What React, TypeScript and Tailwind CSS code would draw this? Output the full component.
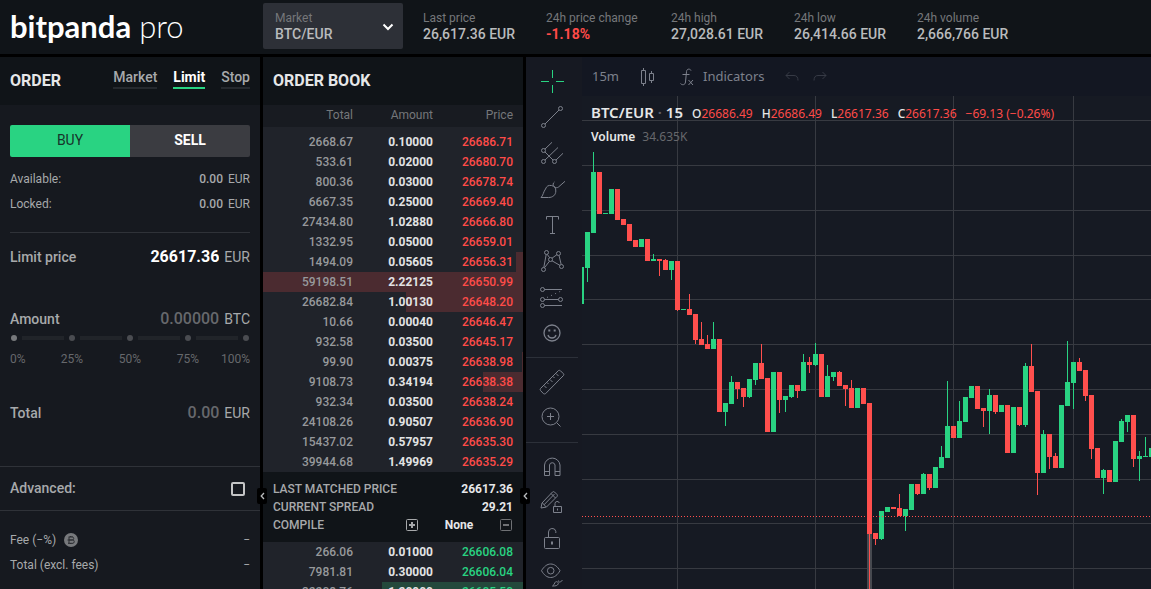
import React from "react";

type Candle = [number, number, number, number, 0 | 1];

// [high, open/close top, open/close bottom, low, rising]
const CANDLES: Candle[] = [
  [267, 267, 304, 304, 1], [232, 232, 268, 282, 1], [152, 172, 233, 233, 1], [172, 172, 214, 214, 0],
  [213, 213, 214, 214, 1], [189, 189, 214, 214, 1], [189, 189, 220, 220, 0], [219, 219, 225, 225, 0],
  [224, 224, 241, 241, 0], [240, 240, 247, 247, 0], [239, 239, 247, 247, 1], [239, 239, 261, 261, 0],
  [254, 259, 261, 261, 1], [259, 259, 261, 276, 0], [259, 260, 270, 270, 0], [261, 261, 270, 280, 1],
  [261, 261, 310, 311, 0], [309, 309, 310, 310, 1], [294, 309, 315, 315, 0], [314, 314, 340, 344, 0],
  [322, 339, 345, 345, 0], [335, 344, 349, 349, 0], [322, 339, 349, 349, 1], [339, 339, 412, 412, 0],
  [403, 403, 412, 426, 1], [376, 382, 404, 404, 1], [382, 382, 389, 399, 0], [388, 388, 397, 407, 0],
  [379, 379, 397, 398, 1], [363, 363, 380, 385, 1], [344, 363, 379, 379, 0], [378, 378, 432, 432, 0],
  [372, 372, 432, 432, 1], [372, 372, 400, 413, 0], [396, 396, 400, 412, 1], [385, 385, 397, 398, 1],
  [385, 385, 391, 398, 0], [354, 362, 391, 391, 1], [357, 362, 365, 373, 0], [343, 354, 365, 366, 1],
  [354, 354, 397, 397, 0], [365, 376, 397, 397, 1], [372, 372, 377, 381, 1], [371, 372, 386, 386, 0],
  [385, 385, 389, 406, 0], [380, 388, 408, 408, 0], [388, 388, 408, 408, 1], [388, 388, 404, 404, 0],
  [403, 403, 534, 620, 0], [533, 533, 539, 545, 0], [511, 511, 539, 540, 1], [507, 507, 512, 512, 1],
  [507, 507, 509, 509, 0], [494, 508, 516, 516, 0], [509, 509, 516, 531, 1], [484, 484, 510, 510, 1],
  [484, 484, 494, 495, 0], [473, 474, 494, 494, 1], [474, 474, 488, 490, 0], [467, 467, 488, 488, 1],
  [446, 457, 468, 468, 1], [381, 426, 458, 458, 1], [426, 426, 438, 438, 0], [401, 421, 438, 438, 1],
  [397, 397, 422, 422, 1], [386, 386, 398, 398, 1], [386, 386, 409, 409, 0], [408, 408, 411, 427, 0],
  [389, 395, 411, 434, 1], [395, 395, 412, 414, 0], [405, 405, 412, 412, 1], [405, 405, 453, 453, 0],
  [407, 407, 453, 453, 1], [407, 407, 425, 426, 0], [363, 366, 425, 427, 1], [344, 366, 392, 392, 0],
  [391, 391, 473, 495, 0], [430, 434, 473, 473, 1], [434, 434, 457, 469, 0], [453, 456, 468, 468, 0],
  [405, 405, 468, 468, 1], [341, 382, 406, 406, 1], [362, 362, 383, 409, 1], [358, 362, 371, 371, 0],
  [370, 370, 396, 401, 0], [395, 395, 449, 459, 0], [448, 448, 478, 478, 0], [469, 470, 478, 494, 1],
  [470, 470, 482, 482, 0], [441, 441, 482, 482, 1], [419, 421, 442, 442, 1], [415, 415, 422, 432, 1],
  [415, 415, 459, 467, 0], [451, 456, 459, 481, 1], [437, 456, 457, 457, 1], [448, 448, 457, 457, 1],
];
const TOP = 96;

const ASKS: [string, string, string, number][] = [
  ["2668.67", "0.10000", "26686.71", 0],
  ["533.61", "0.02000", "26680.70", 0],
  ["800.36", "0.03000", "26678.74", 0],
  ["6667.35", "0.25000", "26669.40", 0],
  ["27434.80", "1.02880", "26666.80", 0],
  ["1332.95", "0.05000", "26659.01", 0],
  ["1494.09", "0.05605", "26656.31", 2.7],
  ["59198.51", "2.22125", "26650.99", 100],
  ["26682.84", "1.00130", "26648.20", 45],
  ["10.66", "0.00040", "26646.47", 0],
  ["932.58", "0.03500", "26645.17", 0],
  ["99.90", "0.00375", "26638.98", 0.4],
  ["9108.73", "0.34194", "26638.38", 15.4],
  ["932.34", "0.03500", "26638.24", 0],
  ["24108.26", "0.90507", "26636.90", 0],
  ["15437.02", "0.57957", "26635.30", 0],
  ["39944.68", "1.49969", "26635.29", 0],
];
const BIDS: [string, string, string, number][] = [
  ["266.06", "0.01000", "26606.08", 0],
  ["7981.81", "0.30000", "26606.04", 0],
  ["32208.76", "1.20900", "26605.50", 54.2],
];

const STATS = [
  { label: "Last price", value: "26,617.36 EUR" },
  { label: "24h price change", value: "-1.18%", down: true },
  { label: "24h high", value: "27,028.61 EUR" },
  { label: "24h low", value: "26,414.66 EUR" },
  { label: "24h volume", value: "2,666,766 EUR" },
];

function Header() {
  return (
    <header className="flex h-[54px] shrink-0 items-center bg-[#101418] pb-[2px]">
      <a href="#" className="flex w-[263px] shrink-0 items-baseline gap-2 pl-[10px] font-['Lato'] text-[31px] leading-9 text-white">
        <span className="font-bold">bitpanda</span>
        <span className="font-light">pro</span>
      </a>
      <div className="relative flex h-[46px] w-[140px] shrink-0 flex-col justify-center rounded-xs bg-[#2d3037] pl-3">
        <label htmlFor="market" className="text-xs leading-4 text-[#75777a]">Market</label>
        <select id="market" className="w-full appearance-none bg-transparent text-sm leading-4 font-medium text-[#b9bbbd] outline-none">
          <option>BTC/EUR</option>
        </select>
        <svg className="pointer-events-none absolute top-4 right-[7px] size-4" viewBox="0 0 16 16" fill="none" stroke="#fff" strokeWidth="2">
          <path d="M3.500 5.500 8 10l4.500-4.500" />
        </svg>
      </div>
      <dl className="ml-5 grid grid-cols-[92px_94px_92px_92px_auto] gap-[31px] whitespace-nowrap">
        {STATS.map((s) => (
          <div key={s.label}>
            <dt className="text-xs leading-4 text-[#75777a]">{s.label}</dt>
            <dd className={s.down ? "text-sm leading-4 font-bold text-[#ff4b48]" : "text-sm leading-4 font-medium text-[#b9bbbd]"}>{s.value}</dd>
          </div>
        ))}
      </dl>
    </header>
  );
}

function OrderPanel() {
  return (
    <section className="flex w-[260px] shrink-0 flex-col overflow-hidden bg-[#16191f] text-[#a7a9ab]">
      <div className="flex h-12 shrink-0 items-center justify-between bg-[#101418] px-[10px]">
        <h2 className="text-base font-bold text-[#e6e7e8]">ORDER</h2>
        <nav className="mb-[5px] flex gap-4 text-sm font-medium">
          <a href="#" className="border-b-2 border-[#25292e] pb-[1px] leading-[18px]">Market</a>
          <a href="#" className="border-b-2 border-[#29d382] pb-[1px] leading-[18px] font-bold text-white">Limit</a>
          <a href="#" className="border-b-2 border-[#25292e] pb-[1px] leading-[18px]">Stop</a>
        </nav>
      </div>
      <div className="flex h-[361px] shrink-0 flex-col px-[10px] pt-5">
        <div className="grid h-8 shrink-0 grid-cols-2 overflow-hidden rounded-xs text-sm">
          <button className="bg-[#29d382] pb-[2px] text-[#17342b]">BUY</button>
          <button className="bg-[#3b3c41] pb-[2px] font-bold text-white">SELL</button>
        </div>
        <div className="mt-[9px] flex h-[25px] items-center justify-between text-xs">
          <span>Available:</span>
          <span className="flex gap-[5px]"><span className="font-medium">0.00</span>EUR</span>
        </div>
        <div className="flex h-[25px] items-center justify-between text-xs">
          <span>Locked:</span>
          <span className="flex gap-[5px]"><span className="font-medium">0.00</span>EUR</span>
        </div>
        <div className="mt-4 flex h-12 items-center gap-[5px] border-t border-[#2f3238] text-sm">
          <label htmlFor="limit" className="shrink-0 font-medium">Limit price</label>
          <input id="limit" defaultValue="26617.36" className="w-full min-w-0 flex-1 bg-transparent text-right text-base font-bold text-white outline-none" />
          <span>EUR</span>
        </div>
        <div className="mt-[27px] flex h-6 items-center gap-[5px] text-sm">
          <label htmlFor="amount" className="shrink-0 font-medium">Amount</label>
          <input id="amount" placeholder="0.00000" className="w-full min-w-0 flex-1 bg-transparent text-right text-base font-medium outline-none placeholder:text-[#66686c]" />
          <span>BTC</span>
        </div>
        <div className="relative mt-[3px] flex h-2 items-center gap-[5px] px-[1px]">
          {[0, 1, 2, 3, 4].map((i) => (
            <React.Fragment key={i}>
              {i > 0 && <span className="h-1 flex-1 bg-[#212429]" />}
              <span className={i === 0 ? "size-[6px] rounded-full bg-[#77797c]" : "size-[6px] rounded-full bg-[#4a4c51]"} />
            </React.Fragment>
          ))}
          <input type="range" aria-label="Share of balance" min={0} max={100} step={25} defaultValue={0} className="absolute inset-0 w-full cursor-pointer opacity-0" />
        </div>
        <div className="mt-[9px] grid grid-cols-[31px_62px_54px_62px_31px] text-xs text-[#66686c]">
          <span>0%</span>
          <span className="text-center">25%</span>
          <span className="text-center">50%</span>
          <span className="text-center">75%</span>
          <span className="flex justify-end">100%</span>
        </div>
        <div className="mt-[34px] flex h-6 items-center gap-[5px] text-sm">
          <label htmlFor="total" className="shrink-0 font-medium">Total</label>
          <input id="total" placeholder="0.00" className="w-full min-w-0 flex-1 bg-transparent text-right text-base font-medium outline-none placeholder:text-[#66686c]" />
          <span>EUR</span>
        </div>
      </div>
      <div className="flex h-11 shrink-0 items-center justify-between border-t border-[#2f3238] pr-[15px] pl-[10px]">
        <label htmlFor="advanced" className="pb-[2px] text-sm font-medium">Advanced:</label>
        <input id="advanced" type="checkbox" className="size-[14px] appearance-none rounded-xs border-2 border-[#c4c5c6]" />
      </div>
      <div className="flex-1 border-t border-[#2f3238] px-[10px] pt-4 text-xs">
        <div className="flex h-[25px] items-center">
          <span>Fee (−%)</span>
          <svg className="ml-2 size-[14px]" viewBox="0 0 14 14">
            <circle cx="7" cy="7" r="7" fill="#77797c" />
            <path d="M5 3.500v7M5 4h3.200a1.400 1.400 0 0 1 0 3H5M5 7h3.600a1.600 1.600 0 0 1 0 3.300H4M3.500 7H5M6.500 3v1M8 3v1M6.500 10v1M8 10v1" fill="none" stroke="#2a2c31" />
          </svg>
          <span className="ml-auto">−</span>
        </div>
        <div className="flex h-[25px] items-center justify-between">
          <span>Total (excl. fees)</span>
          <span>−</span>
        </div>
      </div>
    </section>
  );
}

function BookRows({ rows, ask }: { rows: [string, string, string, number][]; ask: boolean }) {
  const bar = ask ? "#4b2b30" : "#24493c";
  return (
    <table className="w-full table-fixed border-collapse text-right text-xs">
      <colgroup>
        <col className="w-[90px]" />
        <col className="w-[80px]" />
        <col />
      </colgroup>
      <tbody>
        {rows.map(([total, amount, price, depth]) => (
          <tr
            key={price}
            className="h-5"
            style={depth ? { backgroundImage: `linear-gradient(to left, ${bar} ${depth}%, transparent ${depth}%)` } : undefined}
          >
            <td className="p-0 font-medium text-[#97999c]">{total}</td>
            <td className="p-0 font-bold text-[#e2e3e4]">{amount}</td>
            <td className={ask ? "py-0 pr-[10px] pl-0 font-medium text-[#ff4b48]" : "py-0 pr-[10px] pl-0 font-medium text-[#29d382]"}>{price}</td>
          </tr>
        ))}
      </tbody>
    </table>
  );
}

function OrderBook() {
  return (
    <section className="flex w-[260px] shrink-0 flex-col overflow-hidden bg-[#20232a]">
      <div className="flex h-12 shrink-0 items-center bg-[#101418] px-[10px]">
        <h2 className="text-base font-bold text-[#e6e7e8]">ORDER BOOK</h2>
      </div>
      <div className="grid h-[22px] shrink-0 grid-cols-[90px_80px_80px] items-center bg-[#181b21] pb-[2px] text-right text-xs text-[#75777a]">
        <span>Total</span>
        <span>Amount</span>
        <span>Price</span>
      </div>
      <div className="shrink-0 pt-[5px]">
        <BookRows rows={ASKS} ask />
      </div>
      <div className="grid h-[70px] shrink-0 content-center bg-[#101418] px-[10px] text-xs leading-[18px] font-medium text-[#a7a9ab]">
        <div className="flex justify-between">
          <span>LAST MATCHED PRICE</span>
          <span className="font-bold text-[#e6e7e8]">26617.36</span>
        </div>
        <div className="flex justify-between">
          <span>CURRENT SPREAD</span>
          <span className="font-bold text-[#e6e7e8]">29.21</span>
        </div>
        <div className="flex items-center">
          <span className="w-[133px]">COMPILE</span>
          <button aria-label="Increase grouping">
            <svg className="size-3" viewBox="0 0 12 12" fill="none" stroke="#a7a9ab">
              <rect x=".5" y=".5" width="11" height="11" rx="1" />
              <path d="M6 3v6M3 6h6" strokeWidth="2" />
            </svg>
          </button>
          <span className="flex-1 text-center font-bold text-[#e6e7e8]">None</span>
          <button aria-label="Decrease grouping" className="mr-[1px]">
            <svg className="size-3" viewBox="0 0 12 12" fill="none" stroke="#6f7174">
              <rect x=".5" y=".5" width="11" height="11" rx="1" />
              <path d="M3 6h6" strokeWidth="2" />
            </svg>
          </button>
        </div>
      </div>
      <BookRows rows={BIDS} ask={false} />
    </section>
  );
}

function Splitter({ label }: { label: string }) {
  return (
    <div className="relative w-[3px] shrink-0 bg-black">
      <button aria-label={label} className="absolute top-[431px] -left-[3px] z-10 flex h-4 w-[10px] items-center justify-center rounded-xs bg-black">
        <svg className="h-2 w-[5px]" viewBox="0 0 5 8" fill="none" stroke="#b9bbbd" strokeWidth="1.300">
          <path d="M4 1 1.200 4 4 7" />
        </svg>
      </button>
    </div>
  );
}

const TOOLS: { name: string; draw: React.ReactNode }[][] = [
  [
    { name: "Cross", draw: <path stroke="#29d382" d="M14.500 3v8M14.500 18v8M3 14.500h8M18 14.500h8" /> },
    { name: "Trend line", draw: <><circle cx="22.5" cy="5.5" r="2" /><circle cx="5.5" cy="22.5" r="2" /><path d="M7 21 21 7" /></> },
    { name: "Pitchfork", draw: <><circle cx="5.5" cy="11.500" r="2" /><circle cx="5.5" cy="22.5" r="2" /><circle cx="16.500" cy="22.5" r="2" /><path d="m7 10 7-6.700M7 13l8 8M7 21 20 8.500M18 21l7-6.700" /></> },
    { name: "Brush", draw: <path d="M3 22.500C5 21 5.500 16.500 7.500 14a5.300 5.300 0 0 1 10.300 2c0 4-3 6.500-7.300 6.500ZM16.500 7c-1.500 1-2 3-.5 4.500s3.300 1.500 4.500.5l6.500-5.700" /> },
    { name: "Text", draw: <path d="M8.500 8.500v-3h12v3M14.500 5.500v17M12 22.500h5" /> },
    { name: "Patterns", draw: <><circle cx="8.500" cy="5.500" r="2" /><circle cx="20.500" cy="6.500" r="2" /><circle cx="12.500" cy="12.500" r="2" /><circle cx="23.500" cy="19.500" r="2" /><circle cx="5.500" cy="22.500" r="2" /><path d="M8.200 7.500 5.800 20.500M9.200 7.300l2.500 3.500M14 11.200l5-3.600M21 8.500l2.200 9M14 13.800l8 4.600M11.500 14.200l-5 6.500" /></> },
    { name: "Prediction", draw: <><circle cx="4.500" cy="6.500" r="2" /><circle cx="4.500" cy="16.500" r="2" /><circle cx="22.500" cy="16.500" r="2" /><circle cx="4.500" cy="22.500" r="2" /><path d="M6.500 6.500h17.500M6.500 16.500h14M6.500 22.500h17.500" /><path strokeDasharray="1 3.500" d="M9 14.500 23 8" /></> },
    { name: "Icons", draw: <><circle cx="14" cy="14" r="8" strokeWidth="1.300" /><path strokeWidth="1.300" d="M10 16c.5 2 2 3 4 3s3.500-1 4-3" /><path strokeWidth="2" d="M10.300 11.500h2M15.700 11.500h2" /></> },
  ],
  [
    { name: "Measure", draw: <path d="M2.500 20.500 20.500 2.500q1-.5 2 .3l3 3q.7.900 0 1.700L7.500 25.700q-1 .5-2 0l-3-3.200q-.7-1 0-2ZM6 17.500l2.500 2.500M9 14.500l1.500 1.500M12 11.500l2.500 2.500M15 8.500l1.500 1.500M18 5.500l2.500 2.500" /> },
    { name: "Zoom in", draw: <><circle cx="12.500" cy="12.500" r="8.500" /><path d="M12.500 9v7M9 12.500h7M18.800 18.800l3.700 3.700" /></> },
  ],
  [
    { name: "Magnet", draw: <path d="M6.500 22.500V12a7.800 7.800 0 0 1 15.500 0v10.500h-5V12a2.800 2.800 0 0 0-5.500 0v10.500ZM6.500 18.500h5M17 18.500h5" /> },
    { name: "Keep drawing", draw: <><path d="m3 19 1-5L14.500 3q1-.8 2 0l2.500 2.500q.8 1 0 2L8.500 18Z" /><path d="M4.500 14 8 17.800M6 15.800 16.500 5M13 4.500l4.500 4.500" /><path d="M15.500 17.500h8v6h-8ZM17 17.500v-3a2.200 2.200 0 0 1 4.300-.5M19.500 19.500v2" /></> },
    { name: "Lock drawings", draw: <><rect x="6.500" y="12.500" width="15" height="11" rx="1" /><path d="M10.500 12.500V7a3.700 3.700 0 0 1 7.300-.7V8" /><path strokeWidth="2" d="M14 16.500v3" /></> },
    { name: "Hide drawings", draw: <><path d="M3.500 9.700C6 5.500 9 3 12.700 3s6.800 2.500 9.300 6.700C19.500 14 16.500 16.500 12.700 16.500S6 14 3.500 9.700Z" /><circle cx="12.700" cy="9.700" r="3.300" /><path d="M14.500 25q1.700-1 2.500-3.500c1-1.800 4-.5 3.200 1.500-.8 1.700-2.500 2-5.700 2ZM20.500 19.500c0 1.500 1 2 2 1.500l2-2" /></> },
  ],
];

function DrawingTools() {
  return (
    <div className="w-[56px] shrink-0 overflow-hidden bg-[#161922] pt-[6px]">
      {TOOLS.map((group, g) => (
        <div key={g} className={g > 0 ? "mr-1 mt-[6px] border-t border-[#2c3039] pt-[6px]" : "mr-1"}>
          {group.map((tool) => (
            <button key={tool.name} aria-label={tool.name} className="flex h-9 w-full items-center justify-center">
              <svg className="size-7" viewBox="0 0 28 28" fill="none" stroke="#7d818c">{tool.draw}</svg>
            </button>
          ))}
        </div>
      ))}
    </div>
  );
}

function Ohlc({ k, v }: { k: string; v: string }) {
  return (
    <span className="text-[#ff4b48]"><span className="font-medium text-[#e6e7e8]">{k}</span>{v}</span>
  );
}

function Chart() {
  return (
    <section className="flex min-w-0 flex-1 flex-col font-['Noto_Sans']">
      <div className="flex h-[39px] shrink-0 items-center bg-[#131722] pl-[10px] text-[13px] text-[#7d818c]">
        <button>15m</button>
        <button aria-label="Candles" className="ml-[21px]">
          <svg className="h-5 w-4" viewBox="0 0 16 20" fill="none" stroke="#7d818c">
            <path d="M1.500 3.500h4v13h-4ZM3.500 1v2.500M3.500 16.500V19M9.500 6.500h4v7h-4ZM11.500 4v2.500M11.500 13.500V16" />
          </svg>
        </button>
        <button className="ml-6 flex items-center gap-[9px]">
          <svg className="h-5 w-[14px]" viewBox="0 0 14 20" fill="none" stroke="#7d818c">
            <path d="M11 3.500C10.500 2 7 1 6.500 4.500L5.500 15c-.3 3.300-3.500 3.300-5 1.500M2.500 7.500h7M8.500 13l4.500 5M13 13l-4.500 5" />
          </svg>
          Indicators
        </button>
        <button aria-label="Undo" className="ml-5">
          <svg className="h-3 w-[14px]" viewBox="0 0 14 12" fill="none" stroke="#363a45">
            <path d="M4.500 1 1 4.500 4.500 8M1 4.500h8q4 0 4 5" />
          </svg>
        </button>
        <button aria-label="Redo" className="ml-[14px]">
          <svg className="h-3 w-[14px]" viewBox="0 0 14 12" fill="none" stroke="#363a45">
            <path d="M9.500 1 13 4.500 9.500 8M13 4.500H5q-4 0-4 5" />
          </svg>
        </button>
      </div>
      <div className="relative min-h-0 flex-1 overflow-hidden bg-[#161a23]">
        <svg className="block h-full w-full" shapeRendering="crispEdges">
          {[120, 165, 210, 255, 299, 344, 389, 434, 479, 523, 568].map((y) => (
            <rect key={y} x="0" y={y - TOP} width="100%" height="1" fill="#373a41" />
          ))}
          {[95, 233, 371, 491].map((x) => (
            <rect key={x} x={x} y="0" width="1" height="100%" fill="#373a41" />
          ))}
          <rect x="285" y={534 - TOP} width="5" height="100%" fill="#46494f" />
          {CANDLES.map(([h, t, b, l, up], i) => (
            <g key={i} fill={up ? "#29d382" : "#ff4f4d"}>
              <rect x={i * 6 - 1} y={h - TOP} width="1" height={l - h} />
              <rect x={i * 6 - 3} y={t - TOP} width="5" height={b - t} />
            </g>
          ))}
          <line x1="0" x2="100%" y1={516.5 - TOP} y2={516.5 - TOP} stroke="#ff4f4d" strokeDasharray="1 2" />
        </svg>
        <div className="absolute top-[7px] left-[9px] whitespace-nowrap text-[#e6e7e8]">
          <div className="flex items-baseline gap-[9px] text-xs leading-[18px]">
            <span className="text-[15px] leading-[18px] font-semibold">BTC/EUR <span className="text-[#5d606b]">·</span> 15</span>
            <Ohlc k="O" v="26686.49" />
            <Ohlc k="H" v="26686.49" />
            <Ohlc k="L" v="26617.36" />
            <Ohlc k="C" v="26617.36" />
            <span className="text-[#ff4b48]">−69.13 (−0.26%)</span>
          </div>
          <div className="mt-[5px] flex gap-[7px] text-xs leading-[18px]">
            <span className="font-semibold">Volume</span>
            <span className="text-[#66686c]">34.635K</span>
          </div>
        </div>
      </div>
    </section>
  );
}

export default function App() {
  return (
    <div className="flex h-screen flex-col gap-[3px] overflow-hidden bg-black font-['Roboto']">
      <Header />
      <main className="flex min-h-0 flex-1">
        <OrderPanel />
        <Splitter label="Collapse order panel" />
        <OrderBook />
        <Splitter label="Collapse order book" />
        <DrawingTools />
        <Chart />
      </main>
    </div>
  );
}
